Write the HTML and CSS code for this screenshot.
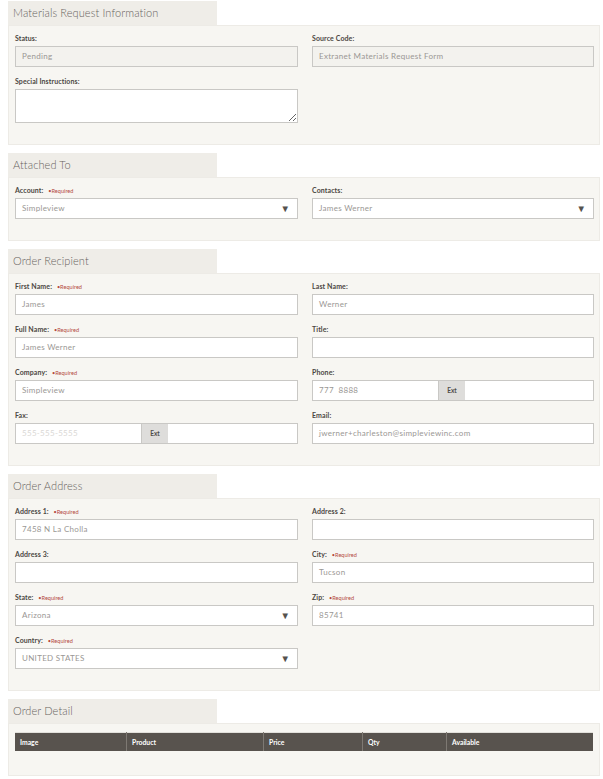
FILE: index.html
```html
<!DOCTYPE html>
<html>
<head>
<meta charset="utf-8">
<link rel="stylesheet" href="styles.css">
</head>
<body>
<div class="page">

  <section class="section">
    <div class="tab">Materials Request Information</div>
    <div class="panel">
      <div class="grid">
        <div class="field">
          <div class="label">Status:</div>
          <div class="input disabled">Pending</div>
        </div>
        <div class="field">
          <div class="label">Source Code:</div>
          <div class="input disabled">Extranet Materials Request Form</div>
        </div>
        <div class="field">
          <div class="label">Special Instructions:</div>
          <textarea class="textarea"></textarea>
        </div>
      </div>
    </div>
  </section>

  <section class="section">
    <div class="tab">Attached To</div>
    <div class="panel">
      <div class="grid">
        <div class="field">
          <div class="label">Account: <span class="req">•Required</span></div>
          <div class="input select"><span>Simpleview</span><span class="arrow">▼</span></div>
        </div>
        <div class="field">
          <div class="label">Contacts:</div>
          <div class="input select"><span>James Werner</span><span class="arrow">▼</span></div>
        </div>
      </div>
    </div>
  </section>

  <section class="section">
    <div class="tab">Order Recipient</div>
    <div class="panel">
      <div class="grid">
        <div class="field">
          <div class="label">First Name: <span class="req">•Required</span></div>
          <div class="input">James</div>
        </div>
        <div class="field">
          <div class="label">Last Name:</div>
          <div class="input">Werner</div>
        </div>
        <div class="field">
          <div class="label">Full Name: <span class="req">•Required</span></div>
          <div class="input">James Werner</div>
        </div>
        <div class="field">
          <div class="label">Title:</div>
          <div class="input"></div>
        </div>
        <div class="field">
          <div class="label">Company: <span class="req">•Required</span></div>
          <div class="input">Simpleview</div>
        </div>
        <div class="field">
          <div class="label">Phone:</div>
          <div class="group">
            <div class="input part">777&nbsp; 8888</div>
            <div class="ext">Ext</div>
            <div class="input rest"></div>
          </div>
        </div>
        <div class="field">
          <div class="label">Fax:</div>
          <div class="group">
            <div class="input part placeholder">555-555-5555</div>
            <div class="ext">Ext</div>
            <div class="input rest"></div>
          </div>
        </div>
        <div class="field">
          <div class="label">Email:</div>
          <div class="input">jwerner+charleston@simpleviewinc.com</div>
        </div>
      </div>
    </div>
  </section>

  <section class="section">
    <div class="tab">Order Address</div>
    <div class="panel">
      <div class="grid">
        <div class="field">
          <div class="label">Address 1: <span class="req">•Required</span></div>
          <div class="input">7458 N La Cholla</div>
        </div>
        <div class="field">
          <div class="label">Address 2:</div>
          <div class="input"></div>
        </div>
        <div class="field">
          <div class="label">Address 3:</div>
          <div class="input"></div>
        </div>
        <div class="field">
          <div class="label">City: <span class="req">•Required</span></div>
          <div class="input">Tucson</div>
        </div>
        <div class="field">
          <div class="label">State: <span class="req">•Required</span></div>
          <div class="input select"><span>Arizona</span><span class="arrow">▼</span></div>
        </div>
        <div class="field">
          <div class="label">Zip: <span class="req">•Required</span></div>
          <div class="input">85741</div>
        </div>
        <div class="field">
          <div class="label">Country: <span class="req">•Required</span></div>
          <div class="input select"><span>UNITED STATES</span><span class="arrow">▼</span></div>
        </div>
      </div>
    </div>
  </section>

  <section class="section">
    <div class="tab">Order Detail</div>
    <div class="panel table-panel">
      <table class="table">
        <thead>
          <tr>
            <th class="c-image">Image</th>
            <th class="c-product">Product</th>
            <th class="c-price">Price</th>
            <th class="c-qty">Qty</th>
            <th class="c-avail">Available</th>
          </tr>
        </thead>
      </table>
    </div>
  </section>

</div>
</body>
</html>
```

FILE: styles.css
```css
html, body {
  margin: 0;
  padding: 0;
  background: #ffffff;
}

body {
  font-family: Lato, "Open Sans", Arial, sans-serif;
  color: #4a4541;
}

.page {
  padding: 1px 3px 0 8px;
}

.section {
  margin-bottom: 8px;
}

.tab {
  width: 204px;
  height: 24px;
  line-height: 24px;
  padding-left: 5px;
  background: #efede8;
  color: #68635e;
  font-size: 11px;
  font-weight: 300;
  letter-spacing: 0.1px;
}

.panel {
  background: #f7f6f2;
  border: 1px solid #edebe6;
  padding: 7px 6px 21px 6px;
}

.grid {
  display: grid;
  grid-template-columns: 283px 282px;
  column-gap: 14px;
  row-gap: 9px;
}

.label {
  height: 11px;
  line-height: 11px;
  margin-bottom: 2px;
  font-size: 7px;
  font-weight: 700;
  letter-spacing: 0.1px;
  color: #4c4743;
}

.req {
  font-size: 5.6px;
  font-weight: 400;
  color: #b54a3f;
  margin-left: 3px;
  letter-spacing: 0;
}

.input {
  box-sizing: border-box;
  height: 21px;
  line-height: 19px;
  background: #ffffff;
  border: 1px solid #c9c8c5;
  padding: 0 7px 0 6px;
  font-size: 8px;
  font-weight: 400;
  letter-spacing: 0.3px;
  color: #9a9794;
  white-space: nowrap;
  overflow: hidden;
}

.input.disabled {
  background: #f3f2ee;
}

.select {
  display: flex;
  justify-content: space-between;
  align-items: center;
}

.arrow {
  font-size: 9.5px;
  color: #55524e;
  line-height: 1;
  letter-spacing: 0;
}

.textarea {
  display: block;
  box-sizing: border-box;
  width: 283px;
  height: 34px;
  margin: 0;
  border: 1px solid #c9c8c5;
  background: #ffffff;
  resize: both;
  font-family: Lato, sans-serif;
}

.group {
  display: flex;
}

.group .part {
  width: 127px;
  flex: none;
}

.group .rest {
  flex: 1;
  border-left: none;
}

.placeholder {
  color: #dad8d5;
}

.ext {
  box-sizing: border-box;
  width: 26px;
  height: 21px;
  line-height: 20px;
  flex: none;
  background: #dedddb;
  text-align: center;
  font-size: 6.5px;
  font-weight: 700;
  color: #4f4c49;
  border-top: 1px solid #c9c8c5;
  border-bottom: 1px solid #c9c8c5;
}

.table-panel {
  padding: 8px 6px 24px 6px;
}

.table {
  width: 578px;
  border-collapse: collapse;
  border-top: 1px solid #e2e0db;
}

.table th {
  height: 18px;
  padding: 0 5px;
  background: #58534e;
  color: #ffffff;
  font-size: 6.8px;
  font-weight: 700;
  text-align: left;
  border-left: 1px solid #7e7973;
}

.table th:first-child {
  border-left: none;
}

.c-image { width: 101px; }
.c-product { width: 126px; }
.c-price { width: 88px; }
.c-qty { width: 73px; }
```
